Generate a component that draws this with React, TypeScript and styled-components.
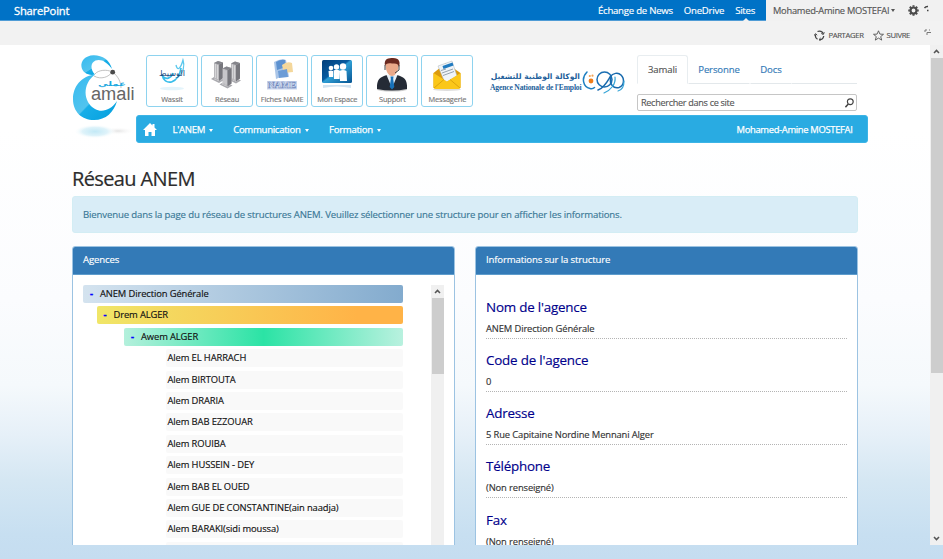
import React from 'react';
import styled, { createGlobalStyle } from 'styled-components';

const GlobalStyle = createGlobalStyle`
  * { box-sizing: border-box; }
  body { margin: 0; overflow: hidden; font-family: "Open Sans", "Noto Sans", sans-serif; font-size: 9.6px; letter-spacing: -0.14px; color: #333; -webkit-text-stroke: 0.15px; }
  svg text { -webkit-text-stroke: 0; letter-spacing: 0; }
`;

const Page = styled.div`
  display: flex;
  flex-direction: column;
  width: 943px;
  height: 559px;
  overflow: hidden;
  white-space: nowrap;
  background: linear-gradient(180deg, #fff 0, #fff 130px, #fbfcfe 300px, #f5f9fc 385px, #e6f0f8 435px, #d5e7f3 480px, #c7dff1 535px, #c5ddf0 559px);
`;

const SuiteBar = styled.header`
  display: flex;
  flex: none;
  height: 21px;
  background: #f1f1f1;
`;
const SuiteBlue = styled.div`
  display: flex;
  align-items: center;
  width: 766px;
  height: 21px;
  padding: 0 11px 0 14px;
  color: #fff;
  background: #0072c6;
  border-bottom: 1px solid #4f9cd6;
`;
const Brand = styled.span`
  font-size: 11.2px;
  margin-right: auto;
  letter-spacing: -0.2px;
  -webkit-text-stroke: 0.3px;
`;
const SuiteLink = styled.span<{ $active?: boolean }>`
  position: relative;
  margin-left: 11px;
  letter-spacing: -0.24px;
  &::after {
    content: '';
    display: ${p => (p.$active ? 'block' : 'none')};
    position: absolute;
    left: 50%;
    bottom: -4px;
    margin-left: -2px;
    border: 3px solid transparent;
    border-top: 0;
    border-bottom-color: #f1f1f1;
  }
`;
const UserMenu = styled.div`
  display: flex;
  align-items: center;
  flex: 1;
  height: 21px;
  padding-left: 7px;
  font-size: 9.3px;
  letter-spacing: -0.25px;
  color: #555;
`;
const Caret = styled.i`
  margin-left: 2px;
  border: 2.5px solid transparent;
  border-top: 3px solid currentColor;
  border-bottom: 0;
`;
const ActionBar = styled.div`
  display: flex;
  flex: none;
  align-items: center;
  justify-content: flex-end;
  height: 24px;
  padding: 4px 12px 0 0;
  font-size: 7.7px;
  letter-spacing: -0.35px;
  color: #555;
  background: #f2f2f2;
  svg { margin-right: 3px; }
`;
const Action = styled.span`
  display: flex;
  align-items: center;
  margin-right: 9px;
`;
const PartialIcon = styled.span`
  display: flex;
  margin: -5px -4px 0 5px;
`;

const Workspace = styled.div`
  display: flex;
  flex: none;
  height: 500px;
`;
const Main = styled.main`
  width: 930px;
  height: 500px;
  overflow: hidden;
  padding: 10px 0 0 72px;
`;

const Masthead = styled.div`
  display: grid;
  grid-template-columns: 64px 732px;
  grid-template-rows: 60px 28px;
`;
const LogoCell = styled.div`
  grid-row: 1 / 3;
  svg { display: block; overflow: visible; }
`;
const TopRow = styled.div`
  display: flex;
  padding-left: 10px;
`;
const Tiles = styled.div`
  display: flex;
  gap: 3.1px;
`;
const Tile = styled.div`
  display: flex;
  flex-direction: column;
  align-items: center;
  width: 52px;
  height: 52px;
  padding-top: 1px;
  border: 1px solid #8ed3ef;
  border-radius: 3px;
  background: #fff;
  font-size: 7.4px;
  letter-spacing: -0.14px;
  line-height: 10px;
  color: #777;
  svg { display: block; }
`;
const Agency = styled.div`
  display: flex;
  width: 136px;
  margin: 14px 0 0 16.5px;
`;
const AgencyNames = styled.div`
  width: 90px;
  margin-right: 2px;
  color: #245f9b;
`;
const ArabicName = styled.div`
  direction: rtl;
  text-align: right;
  font: 700 7.6px/12px "DejaVu Sans", sans-serif;
  letter-spacing: 0;
  -webkit-text-stroke: 0;
  margin-top: 2px;
`;
const FrenchName = styled.div`
  font: 700 7.6px/9px "Liberation Serif", serif;
  letter-spacing: -0.16px;
  -webkit-text-stroke: 0;
`;

const Finder = styled.div`
  width: 220px;
  margin-left: 11px;
`;
const TabList = styled.div`
  display: flex;
  height: 29px;
  line-height: 28px;
`;
const Tab = styled.span<{ $w: number; $active?: boolean }>`
  width: ${p => p.$w}px;
  text-align: center;
  letter-spacing: -0.15px;
  color: ${p => (p.$active ? '#555' : '#337ab7')};
  border: 1px solid ${p => (p.$active ? '#e8edf0' : 'transparent')};
  border-bottom-color: ${p => (p.$active ? 'transparent' : '#e3e8eb')};
  border-radius: ${p => (p.$active ? '3px 3px 0 0' : '0')};
`;
const TabRest = styled.span`
  flex: 1;
  border-bottom: 1px solid #e3e8eb;
`;
const Search = styled.div`
  display: flex;
  align-items: center;
  justify-content: space-between;
  height: 17px;
  margin-top: 10px;
  padding: 0 2px 0 3px;
  border: 1px solid #c6c6c6;
  border-radius: 2px;
  background: #fff;
  font-size: 9.1px;
  letter-spacing: -0.3px;
  color: #555;
`;
const NavBar = styled.nav`
  display: flex;
  align-items: center;
  height: 28px;
  padding: 0 14.5px 0 6px;
  color: #fff;
  background: #29abe2;
  border: 1px solid #3cb4e6;
  border-radius: 3px;
  -webkit-text-stroke: 0.25px;
`;
const NavItem = styled.span<{ $gap: number }>`
  display: flex;
  align-items: center;
  margin-left: ${p => p.$gap}px;
  letter-spacing: -0.29px;
  ${Caret} { margin-left: 4px; margin-top: 2px; }
`;
const NavUser = styled.span`
  margin-left: auto;
  font-size: 9.4px;
  letter-spacing: -0.31px;
`;

const Title = styled.h1`
  margin: 19px 0 0;
  height: 34px;
  font-size: 20px;
  line-height: 34px;
  font-weight: 400;
  letter-spacing: -0.62px;
  -webkit-text-stroke: 0.2px;
  color: #2c2c2c;
`;
const Notice = styled.div`
  width: 786px;
  height: 37px;
  padding-left: 10px;
  line-height: 35px;
  border: 1px solid #d3edf4;
  border-radius: 3px;
  color: #3a7896;
  background: #d9edf7;
`;
const Columns = styled.div`
  display: flex;
  gap: 20px;
  margin-top: 13px;
`;
const Panel = styled.section`
  width: 383px;
  height: 330px;
  border: 1px solid #9cc3e2;
  border-radius: 3px;
  background: #fff;
`;
const PanelHead = styled.div`
  height: 28px;
  padding-left: 10px;
  line-height: 26px;
  color: #fff;
  background: #337ab7;
  border-bottom: 1px solid #5e9ccc;
  border-radius: 2px 2px 0 0;
`;
const TreeBody = styled.div`
  display: flex;
  justify-content: space-between;
  padding: 10px 10px 0;
`;
const Tree = styled.div`
  display: flex;
  flex-direction: column;
  gap: 3.4px;
  width: 320px;
`;
const Node = styled.div<{ $indent: number; $bg: string; $leaf?: boolean }>`
  height: 18px;
  flex: none;
  margin-left: ${p => p.$indent}px;
  padding-left: ${p => (p.$leaf ? 2 : 7)}px;
  line-height: 18.6px;
  font-size: 9.4px;
  letter-spacing: -0.11px;
  color: #111;
  background: ${p => p.$bg};
  border-radius: 2px;
`;
const Toggle = styled.b`
  display: inline-block;
  width: 10px;
  color: #00f;
  -webkit-text-stroke: 0.4px;
`;
const InfoBody = styled.div`
  padding: 19.5px 10px 0;
`;
const Field = styled.div`
  height: 53.3px;
`;
const FieldName = styled.div`
  height: 24px;
  line-height: 24px;
  font-size: 13.4px;
  letter-spacing: -0.2px;
  color: #00008b;
`;
const FieldValue = styled.div`
  height: 20px;
  line-height: 19px;
  font-size: 9.4px;
  letter-spacing: -0.12px;
  border-bottom: 1px dotted #b4b4b4;
`;

const ScrollTrack = styled.div<{ $h: number }>`
  display: flex;
  flex-direction: column;
  align-items: center;
  flex: none;
  width: 13px;
  height: ${p => p.$h}px;
  background: #f0f0f0;
`;
const ScrollThumb = styled.div<{ $h: number }>`
  width: 12px;
  height: ${p => p.$h}px;
  background: #cdcdcd;
`;
const ScrollEnd = styled.div<{ $down?: boolean }>`
  display: flex;
  align-items: center;
  justify-content: center;
  width: 13px;
  height: 13px;
  margin-top: ${p => (p.$down ? 'auto' : 0)};
  transform: ${p => (p.$down ? 'rotate(180deg)' : 'none')};
`;

const ScrollArrow = ({ down }: { down?: boolean }) => (
  <ScrollEnd $down={down}>
    <svg width="7" height="5" viewBox="0 0 7 5"><path d="M1 4l2.5-2.6L6 4" fill="none" stroke="#555" strokeWidth="1.5" /></svg>
  </ScrollEnd>
);

const AmaliLogo = () => (
  <svg width="64" height="88" viewBox="72 55 64 88">
    <defs>
      <linearGradient id="lg" x1="0" y1="0" x2="1" y2="1"><stop offset="0" stopColor="#35baf0" /><stop offset=".5" stopColor="#52c4ee" /><stop offset=".52" stopColor="#18aee8" /><stop offset="1" stopColor="#049fdd" /></linearGradient>
      <radialGradient id="sh"><stop offset="0" stopColor="#c3e9f6" /><stop offset=".6" stopColor="#dff3fa" /><stop offset="1" stopColor="#fff" stopOpacity="0" /></radialGradient>
      <radialGradient id="sg"><stop offset="0" stopColor="#e4e4e4" /><stop offset="1" stopColor="#fff" stopOpacity="0" /></radialGradient>
    </defs>
    <ellipse cx="118" cy="131" rx="17" ry="4" fill="url(#sg)" />
    <ellipse cx="95" cy="131.500" rx="21" ry="7" fill="url(#sh)" />
    <path d="M112 69C110 60 102 55 93.500 55.200C85 55.500 80.500 61 81.500 67C82.500 73 89 76 95 74.500C90.500 70 90 63 95.500 60.500C101 58.500 107 62 112 69Z" fill="url(#lg)" />
    <path d="M95 74.500C81 76 73 87 73 99C73 112 82 120 94 120C106 120 114 112 117 101C111 110 102 113 95 109C83 102 82 84 95 74.500Z" fill="url(#lg)" />
    <path d="M95 74C98 70 107 69 112 72C109 77 101 80 94 76M112.500 72C118 76 121 82 121 88" fill="none" stroke="#a8a8a8" strokeWidth=".7" />
    <circle cx="112.700" cy="72.200" r="2.400" fill="#4b4b4b" />
    <text x="98" y="86" textLength="28" lengthAdjust="spacingAndGlyphs" fontFamily="DejaVu Sans, sans-serif" fontWeight="700" fontSize="6.500" fill="#1da9e0">عملي</text>
    <text x="91" y="100" textLength="43.500" lengthAdjust="spacingAndGlyphs" fontFamily="Liberation Sans, sans-serif" fontSize="18" fill="#666">amali</text>
  </svg>
);

const WassitIcon = () => (
  <svg width="36" height="37" viewBox="0 0 36 37">
    <ellipse cx="18" cy="31.500" rx="12" ry="1.800" fill="#e4f4fb" />
    <path d="M27 11C26 18 23 23 17.500 25C13 26 9 23 8.500 19C12 23 17 21.500 19 16" fill="none" stroke="#37bdea" strokeWidth="1.700" />
    <path d="M22 8C23 13 26 14 29 3C31 9 29 16 25 19" fill="none" stroke="#5bc8ed" strokeWidth="1.300" />
    <text x="5" y="18.500" textLength="26" lengthAdjust="spacingAndGlyphs" fontFamily="DejaVu Sans, sans-serif" fontSize="8" fill="#1b4d80">الوسيط</text>
  </svg>
);
const Tower = ({ x, y }: { x: number; y: number }) => (
  <g transform={`translate(${x} ${y})`}>
    <path d="M-3 18L0 16V18L5 20L8 18L10 19L5 22Z" fill="#aaaaaf" />
    <path d="M0 2L4 0L9 1.500V17L5 20L0 18Z" fill="#b9b8bc" />
    <path d="M5 3.500L9 1.500V17L5 20Z" fill="#77777d" />
    <path d="M1.500 3V17M3.500 4V18" stroke="#dddde0" strokeWidth=".8" />
    <path d="M0 2L4 0L9 1.500L5 3.500Z" fill="#85858b" />
  </g>
);
const NetworkIcon = () => (
  <svg width="36" height="37" viewBox="0 0 36 37"><Tower x={5} y={4} /><Tower x={22} y={4.5} /><Tower x={13.5} y={9.5} /></svg>
);
const NameIcon = () => (
  <svg width="36" height="37" viewBox="0 0 36 37">
    <path d="M10 5Q17 1 22 3L25 20Q19 18 12 22Z" fill="#a9c5e8" />
    <path d="M12 5Q17 2 21 3L22 10L13 13Z" fill="#5c91d0" />
    <path d="M18 8Q23 4 28 6L29 15Q24 15 20 17Z" fill="#f4d79b" />
    <path d="M14 14L23 12L24 20L15 21Z" fill="#6d9cd6" />
    <rect x="3" y="24" width="30" height="8.500" fill="#c9d5ed" />
    <text x="4" y="31.300" textLength="28" lengthAdjust="spacingAndGlyphs" fontFamily="Liberation Serif, serif" fontWeight="700" fontSize="9" fill="#f2f5fc" stroke="#7189bd" strokeWidth=".5">NAME</text>
  </svg>
);
const SpaceIcon = () => (
  <svg width="36" height="37" viewBox="0 0 36 37">
    <defs><linearGradient id="sp" x1="0" x2="1" y2="1"><stop offset="0" stopColor="#033e79" /><stop offset=".45" stopColor="#075a9f" /><stop offset=".5" stopColor="#2f9fd5" /><stop offset="1" stopColor="#075492" /></linearGradient></defs>
    <rect x="3" y="3" width="30" height="23" rx="1.500" fill="url(#sp)" />
    <path d="M4 28H32V31Q18 28 4 31Z" fill="#d2e3f0" />
    <g fill="#fff"><circle cx="12" cy="11" r="2.300" /><circle cx="17.500" cy="10" r="2.700" /><circle cx="24" cy="9.500" r="3.200" /><path d="M9.500 14Q12 13 14 14V20H10ZM14.500 13.500Q17.500 12 20.500 13.500V22H15ZM20.500 14Q24 12 27.500 14L28 24H21Z" /></g>
  </svg>
);
const SupportIcon = () => (
  <svg width="36" height="37" viewBox="0 0 36 37">
    <ellipse cx="18" cy="32.500" rx="15" ry="2" fill="#ccc" />
    <path d="M3 32C2.500 22 6 20 13 18H23C30 20 33.500 22 33 32Q18 35 3 32Z" fill="#252b36" />
    <path d="M12.500 18L18 31L23.500 18Z" fill="#e9f1f8" />
    <path d="M16.500 19.500H19.500L19.200 22L20.300 30L18 32.500L15.700 30L16.800 22Z" fill="#1871b8" />
    <path d="M11.500 8C11.500 1 24.500 1 24.500 8C24.500 14 21.500 19 18 19C14.500 19 11.500 14 11.500 8Z" fill="#eaa98a" />
    <path d="M11 9C9.500 1 15 1 19 1C25.500 1 26.500 5 25 10C24 7 23 6 18 6.500C13 6 12 7 11 9Z" fill="#6a2920" />
    <path d="M11 8V13M25 8V13L21 16" stroke="#444" fill="none" />
  </svg>
);
const MailIcon = () => (
  <svg width="36" height="37" viewBox="0 0 36 37">
    <ellipse cx="18" cy="32.500" rx="14" ry="1.500" fill="#ddd" />
    <path d="M4.500 16L17 6L31.500 16V31H4.500Z" fill="#dc9b0c" />
    <path d="M9 9L23 4L28 19L16 26Z" fill="#f0f4f8" stroke="#a8b2bb" strokeWidth=".5" />
    <path d="M13.500 9L23.500 5.500L24.500 8.500L14.500 12Z" fill="#217bc0" />
    <path d="M12 13.500L17 12M13 16L24 12M14 18.500L25 14.500" stroke="#7d8d9b" strokeWidth=".8" />
    <path d="M4.500 16L18 24.500L31.500 16V30Q31.500 32 29.500 32H6.500Q4.500 32 4.500 30Z" fill="#fbc719" />
    <path d="M5 31L15 22.500M31 31L21 22.500" stroke="#d49b08" strokeWidth=".8" />
  </svg>
);
const AnemMark = () => (
  <svg width="44" height="26" viewBox="0 0 44 26">
    <g fill="none" strokeLinecap="round">
      <path d="M5 3C-1 9 1 18 8 19.500C10 20 11.500 19.500 12.500 18.500" stroke="#1f7fc0" strokeWidth="1.500" />
      <circle cx="22.500" cy="10.500" r="7.500" stroke="#1b6fb3" strokeWidth="1.500" />
      <path d="M16 21C22 19 25 13 28 8C31 4 36 3 39 6C43 10 42 17 37 18.500C31 20 27 14 29 9" stroke="#1769ad" strokeWidth="1.500" />
      <path d="M22 24C29 21 34 15 33 8M36 22C40 21 42 17 42 12" stroke="#35a4d6" strokeWidth="1.200" />
    </g>
    <circle cx="9" cy="12" r="2.400" fill="#ef7d1a" /><circle cx="7.800" cy="7" r="1.100" fill="#f3a253" /><circle cx="10.500" cy="6.700" r="1.100" fill="#f3a253" />
  </svg>
);
const GearIcon = () => (
  <svg width="11" height="11" viewBox="-6 -6 12 12">
    <circle r="3.300" fill="none" stroke="#4a4a4a" strokeWidth="2.400" />
    {[0, 45, 90, 135].map(a => <path key={a} d="M0-5.700V-4M0 4V5.700" stroke="#4a4a4a" strokeWidth="2.200" transform={`rotate(${a})`} />)}
  </svg>
);
const HomeIcon = () => (
  <svg width="14" height="13" viewBox="0 0 14 13"><path d="M7 0L9.500 2.500V1H11.500V4.500L14 7H12V13H8.500V9H5.500V13H2V7H0Z" fill="#fff" /></svg>
);
const ShareIcon = () => (
  <svg width="11" height="11" viewBox="0 0 11 11" fill="none" stroke="#444" strokeWidth="1.300">
    <path d="M3.500 1.500A4.200 4.200 0 0 1 9.300 3.800M9.700 6A4.200 4.200 0 0 1 5.500 9.700M3.500 9.200A4.200 4.200 0 0 1 1.500 4.500" />
    <path d="M10.300 2.300L9.300 4.500L7.300 3.500M6.700 8L5 9.600L6.700 11M.2 5.500L1.500 3.700L3.200 5.200" strokeWidth="1" />
  </svg>
);
const StarIcon = () => (
  <svg width="11" height="11" viewBox="0 0 11 11"><path d="M5.500.8L6.900 4.100L10.500 4.300L7.700 6.600L8.700 10.100L5.500 8.100L2.300 10.100L3.300 6.600L.5 4.300L4.100 4.100Z" fill="none" stroke="#555" strokeWidth=".9" /></svg>
);
const SearchIcon = () => (
  <svg width="9" height="10" viewBox="0 0 9 10" fill="none" stroke="#444"><circle cx="5.300" cy="3.700" r="2.900" strokeWidth="1.200" /><path d="M3.300 5.900L.4 9.200" strokeWidth="1.500" /></svg>
);
const HelpIcon = () => (
  <svg width="6" height="12" viewBox="0 0 6 12"><path d="M.5 3Q1.500 1.300 4 1.500M3 5.500H4.500" fill="none" stroke="#444" strokeWidth="1.500" /></svg>
);
const FocusIcon = () => (
  <svg width="8" height="7" viewBox="0 0 8 7"><path d="M1 3V1H3M3 6V3.500H7M5 1H6" fill="none" stroke="#777" /></svg>
);

const tiles = [
  { label: 'Wassit', Icon: WassitIcon },
  { label: 'Réseau', Icon: NetworkIcon },
  { label: 'Fiches NAME', Icon: NameIcon },
  { label: 'Mon Espace', Icon: SpaceIcon },
  { label: 'Support', Icon: SupportIcon },
  { label: 'Messagerie', Icon: MailIcon },
];
const branches = [
  { label: 'ANEM Direction Générale', indent: 0, bg: 'linear-gradient(90deg, #d4e3ef, #83abce)' },
  { label: 'Drem ALGER', indent: 13.5, bg: 'linear-gradient(90deg, #f0e668, #ffb347 85%)' },
  { label: 'Awem ALGER', indent: 41, bg: 'linear-gradient(90deg, #b4f0dc, #2be3a5 50%, #b9f1df)' },
];
const agencies = ['EL HARRACH', 'BIRTOUTA', 'DRARIA', 'BAB EZZOUAR', 'ROUIBA', 'HUSSEIN - DEY', 'BAB EL OUED', 'GUE DE CONSTANTINE(ain naadja)', 'BARAKI(sidi moussa)', ''];
const fields = [
  ["Nom de l'agence", 'ANEM Direction Générale'],
  ["Code de l'agence", '0'],
  ['Adresse', '5 Rue Capitaine Nordine Mennani Alger'],
  ['Téléphone', '(Non renseigné)'],
  ['Fax', '(Non renseigné)'],
];

const GearSlot = styled.span`
  display: flex;
  margin: 0 5px 0 13px;
`;

export default function App() {
  return (
    <Page>
      <GlobalStyle />
      <SuiteBar>
        <SuiteBlue>
          <Brand>SharePoint</Brand>
          <SuiteLink>Échange de News</SuiteLink>
          <SuiteLink>OneDrive</SuiteLink>
          <SuiteLink $active>Sites</SuiteLink>
        </SuiteBlue>
        <UserMenu>Mohamed-Amine MOSTEFAI<Caret /><GearSlot><GearIcon /></GearSlot><HelpIcon /></UserMenu>
      </SuiteBar>
      <ActionBar>
        <Action><ShareIcon />PARTAGER</Action>
        <Action><StarIcon />SUIVRE</Action>
        <PartialIcon><FocusIcon /></PartialIcon>
      </ActionBar>
      <Workspace>
        <Main>
          <Masthead>
            <LogoCell><AmaliLogo /></LogoCell>
            <TopRow>
              <Tiles>
                {tiles.map(({ label, Icon }) => <Tile key={label}><Icon />{label}</Tile>)}
              </Tiles>
              <Agency>
                <AgencyNames>
                  <ArabicName>الوكالة الوطنية للتشغيل</ArabicName>
                  <FrenchName>Agence Nationale de l'Emploi</FrenchName>
                </AgencyNames>
                <AnemMark />
              </Agency>
              <Finder>
                <TabList>
                  <Tab $w={51} $active>3amali</Tab>
                  <Tab $w={62}>Personne</Tab>
                  <Tab $w={42}>Docs</Tab>
                  <TabRest />
                </TabList>
                <Search>Rechercher dans ce site<SearchIcon /></Search>
              </Finder>
            </TopRow>
            <NavBar>
              <HomeIcon />
              <NavItem $gap={15.5}>L'ANEM<Caret /></NavItem>
              <NavItem $gap={20}>Communication<Caret /></NavItem>
              <NavItem $gap={20.5}>Formation<Caret /></NavItem>
              <NavUser>Mohamed-Amine MOSTEFAI</NavUser>
            </NavBar>
          </Masthead>
          <Title>Réseau ANEM</Title>
          <Notice>Bienvenue dans la page du réseau de structures ANEM. Veuillez sélectionner une structure pour en afficher les informations.</Notice>
          <Columns>
            <Panel>
              <PanelHead>Agences</PanelHead>
              <TreeBody>
                <Tree>
                  {branches.map(b => <Node key={b.label} $indent={b.indent} $bg={b.bg}><Toggle>-</Toggle>{b.label}</Node>)}
                  {agencies.map(a => <Node key={a} $indent={82.5} $bg="#f9f9f9" $leaf>{a && `Alem ${a}`}</Node>)}
                </Tree>
                <ScrollTrack $h={270}><ScrollArrow /><ScrollThumb $h={76} /></ScrollTrack>
              </TreeBody>
            </Panel>
            <Panel>
              <PanelHead>Informations sur la structure</PanelHead>
              <InfoBody>
                {fields.map(([name, value]) => (
                  <Field key={name}><FieldName>{name}</FieldName><FieldValue>{value}</FieldValue></Field>
                ))}
              </InfoBody>
            </Panel>
          </Columns>
        </Main>
        <ScrollTrack $h={500}><ScrollArrow /><ScrollThumb $h={315} /><ScrollArrow down /></ScrollTrack>
      </Workspace>
    </Page>
  );
}
